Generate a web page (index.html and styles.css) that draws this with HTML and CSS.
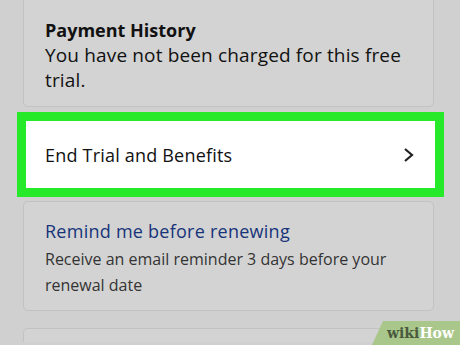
FILE: index.html
```html
<!DOCTYPE html>
<html lang="en">
<head>
    <meta charset="UTF-8">
    <meta name="viewport" content="width=device-width, initial-scale=1.0">
    <title>Prime Membership</title>
    <link rel="stylesheet" href="styles.css">
</head>
<body>

    <div class="page">
        <div class="card card-top">
            <h3>Payment History</h3>
            <p>You have not been charged for this free trial.</p>
        </div>

        <div class="highlight">
            <div class="row">
                <span>End Trial and Benefits</span>
                <svg class="chevron" width="12" height="16" viewBox="0 0 12 16">
                    <path d="M2 2 L9 8 L2 14" fill="none" stroke="#222" stroke-width="2.2"/>
                </svg>
            </div>
        </div>

        <div class="card card-remind">
            <a class="link">Remind me before renewing</a>
            <p class="small">Receive an email reminder 3 days before your renewal date</p>
        </div>

        <div class="card card-bottom"></div>
    </div>

    <div class="watermark"><span class="wiki">wiki</span><span class="how">How</span></div>

</body>
</html>
```

FILE: styles.css
```css
body {
    margin: 0;
    background: #d0d0d0;
    font-family: "Open Sans", Arial, sans-serif;
    color: #111;
    width: 460px;
    height: 345px;
    overflow: hidden;
    position: relative;
}

.page {
    display: flex;
    flex-direction: column;
    padding: 0 26px 0 23px;
}

.card {
    background: #d3d3d3;
    border: 1px solid #c2c2c2;
    border-radius: 5px;
    padding: 0 21px;
}

.card-top {
    margin-top: -10px;
    padding-top: 27px;
    height: 88px;
}

.card h3 {
    margin: 0;
    font-size: 18px;
    font-weight: bold;
    line-height: 25px;
}

.card p {
    margin: 0;
    font-size: 19px;
    letter-spacing: 0.15px;
    line-height: 25px;
    width: 365px;
}

.highlight {
    margin: 5px -10px 4px -6px;
    border: 9px solid #26e92a;
    background: #fff;
}

.row {
    display: flex;
    align-items: center;
    justify-content: space-between;
    height: 67px;
    padding: 0 20px 0 19px;
    font-size: 18px;
    letter-spacing: 0.2px;
}

.card-remind {
    padding-top: 17px;
    height: 91px;
}

.link {
    font-size: 18px;
    letter-spacing: 0.25px;
    line-height: 25px;
    margin-bottom: 2px;
    color: #17347a;
    display: block;
}

.card p.small {
    font-size: 16px;
    letter-spacing: 0;
    line-height: 26px;
    color: #333;
    width: 360px;
}

.card-bottom {
    margin-top: 17px;
    height: 13px;
    border-bottom: none;
    border-radius: 5px 5px 0 0;
}

.watermark {
    position: absolute;
    right: 0;
    bottom: 0;
    width: 88px;
    height: 24px;
    background: #a9c78a;
    clip-path: polygon(11px 0, 100% 0, 100% 100%, 0 100%);
    font-family: "DejaVu Serif", serif;
    font-weight: bold;
    font-size: 14px;
    line-height: 24px;
    padding-left: 15px;
    box-sizing: border-box;
    white-space: nowrap;
}

.wiki {
    color: #4a5a3e;
}

.how {
    color: #fff;
}
```
